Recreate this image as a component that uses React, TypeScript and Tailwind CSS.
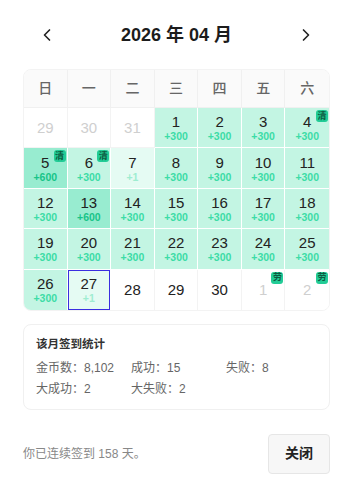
import { ChevronLeft, ChevronRight } from "lucide-react"

type Day = {
  n: number
  sub?: string
  tone: "muted" | "plain" | "green" | "deep" | "pale"
  badge?: string
  today?: boolean
}

const font = { fontFamily: '"Liberation Sans", "Noto Sans CJK SC", sans-serif' }

const weeks = ["日", "一", "二", "三", "四", "五", "六"]

const g = (n: number, extra: Partial<Day> = {}): Day => ({ n, sub: "+300", tone: "green", ...extra })

const days: Day[] = [
  { n: 29, tone: "muted" },
  { n: 30, tone: "muted" },
  { n: 31, tone: "muted" },
  g(1),
  g(2),
  g(3),
  g(4, { badge: "清" }),
  g(5, { sub: "+600", tone: "deep", badge: "清" }),
  g(6, { badge: "清" }),
  { n: 7, sub: "+1", tone: "pale" },
  g(8),
  g(9),
  g(10),
  g(11),
  g(12),
  g(13, { sub: "+600", tone: "deep" }),
  g(14),
  g(15),
  g(16),
  g(17),
  g(18),
  g(19),
  g(20),
  g(21),
  g(22),
  g(23),
  g(24),
  g(25),
  g(26),
  { n: 27, sub: "+1", tone: "pale", today: true },
  { n: 28, tone: "plain" },
  { n: 29, tone: "plain" },
  { n: 30, tone: "plain" },
  { n: 1, tone: "muted", badge: "劳" },
  { n: 2, tone: "muted", badge: "劳" },
]

const cellBg = {
  muted: "bg-white border-[#f3f3f3]",
  plain: "bg-white border-[#f3f3f3]",
  green: "bg-[#c3f5e3] border-white",
  deep: "bg-[#98ecd0] border-white",
  pale: "bg-[#e5fbf3] border-white",
}

const subColor = {
  muted: "",
  plain: "",
  green: "text-[#3cdca6]",
  deep: "text-[#17c488]",
  pale: "text-[#9eedd1]",
}

function DayCell({ d, i }: { d: Day; i: number }) {
  const lastCol = i % 7 === 6
  const lastRow = i >= 28
  return (
    <div
      className={`relative flex h-[40.4px] flex-col items-center justify-center ${cellBg[d.tone]} ${
        lastCol ? "" : "border-r"
      } ${lastRow ? "" : "border-b"}`}
    >
      {d.today && <div className="absolute inset-0 border border-[#3a2ee0]" />}
      {d.badge && (
        <span className="absolute top-[2px] right-[1px] flex h-[12px] w-[12px] items-center justify-center rounded-[3px] bg-[#22cc96] text-[9px] leading-none font-bold text-[#0d5a40]">
          {d.badge}
        </span>
      )}
      <span
        className={`text-[15px] leading-[17px] ${d.tone === "muted" ? "text-[#cfcfcf]" : "text-[#222]"} ${
          d.sub ? "mt-[1px]" : ""
        }`}
      >
        {d.n}
      </span>
      {d.sub && <span className={`text-[10.5px] leading-[13px] font-bold ${subColor[d.tone]}`}>{d.sub}</span>}
    </div>
  )
}

export default function App() {
  return (
    <div className="w-[352px] bg-white px-[23px] pt-[22px] pb-[22px] pr-[22px]" style={font}>
      {/* month header */}
      <div className="flex h-[26px] items-center justify-between px-[14px]">
        <ChevronLeft className="h-[20px] w-[20px] text-[#222]" strokeWidth={2} />
        <h1 className="text-[18px] font-bold text-[#1c1c1c]">2026 年 04 月</h1>
        <ChevronRight className="h-[20px] w-[20px] text-[#222]" strokeWidth={2} />
      </div>

      {/* calendar */}
      <div className="mt-[21px] overflow-hidden rounded-lg border border-[#f3f3f3]">
        <div className="grid grid-cols-7 bg-[#fafafa]">
          {weeks.map((w, i) => (
            <div
              key={w}
              className={`flex h-[38px] items-center justify-center border-b border-[#f0f0f0] text-[14px] font-medium text-[#666] ${
                i === 6 ? "" : "border-r"
              }`}
            >
              {w}
            </div>
          ))}
        </div>
        <div className="grid grid-cols-7">
          {days.map((d, i) => (
            <DayCell key={i} d={d} i={i} />
          ))}
        </div>
      </div>

      {/* monthly stats */}
      <div className="mt-[13px] rounded-lg border border-[#f0f0f0] px-[12px] pt-[11px] pb-[12px]">
        <p className="text-[11.5px] leading-[16px] font-bold text-[#333]">该月签到统计</p>
        <div className="mt-[8px] grid grid-cols-[95px_95px_1fr] gap-y-[5px] text-[12px] leading-[16px] text-[#666]">
          <span>金币数：8,102</span>
          <span>成功：15</span>
          <span>失败：8</span>
          <span>大成功：2</span>
          <span>大失败：2</span>
        </div>
      </div>

      {/* footer */}
      <div className="mt-[24px] flex items-center justify-between">
        <p className="text-[12px] text-[#888]">你已连续签到 158 天。</p>
        <button className="h-[40px] w-[62px] rounded-[4px] border border-[#e6e6e6] bg-[#f7f7f7] text-[14px] font-bold text-[#222]">
          关闭
        </button>
      </div>
    </div>
  )
}
